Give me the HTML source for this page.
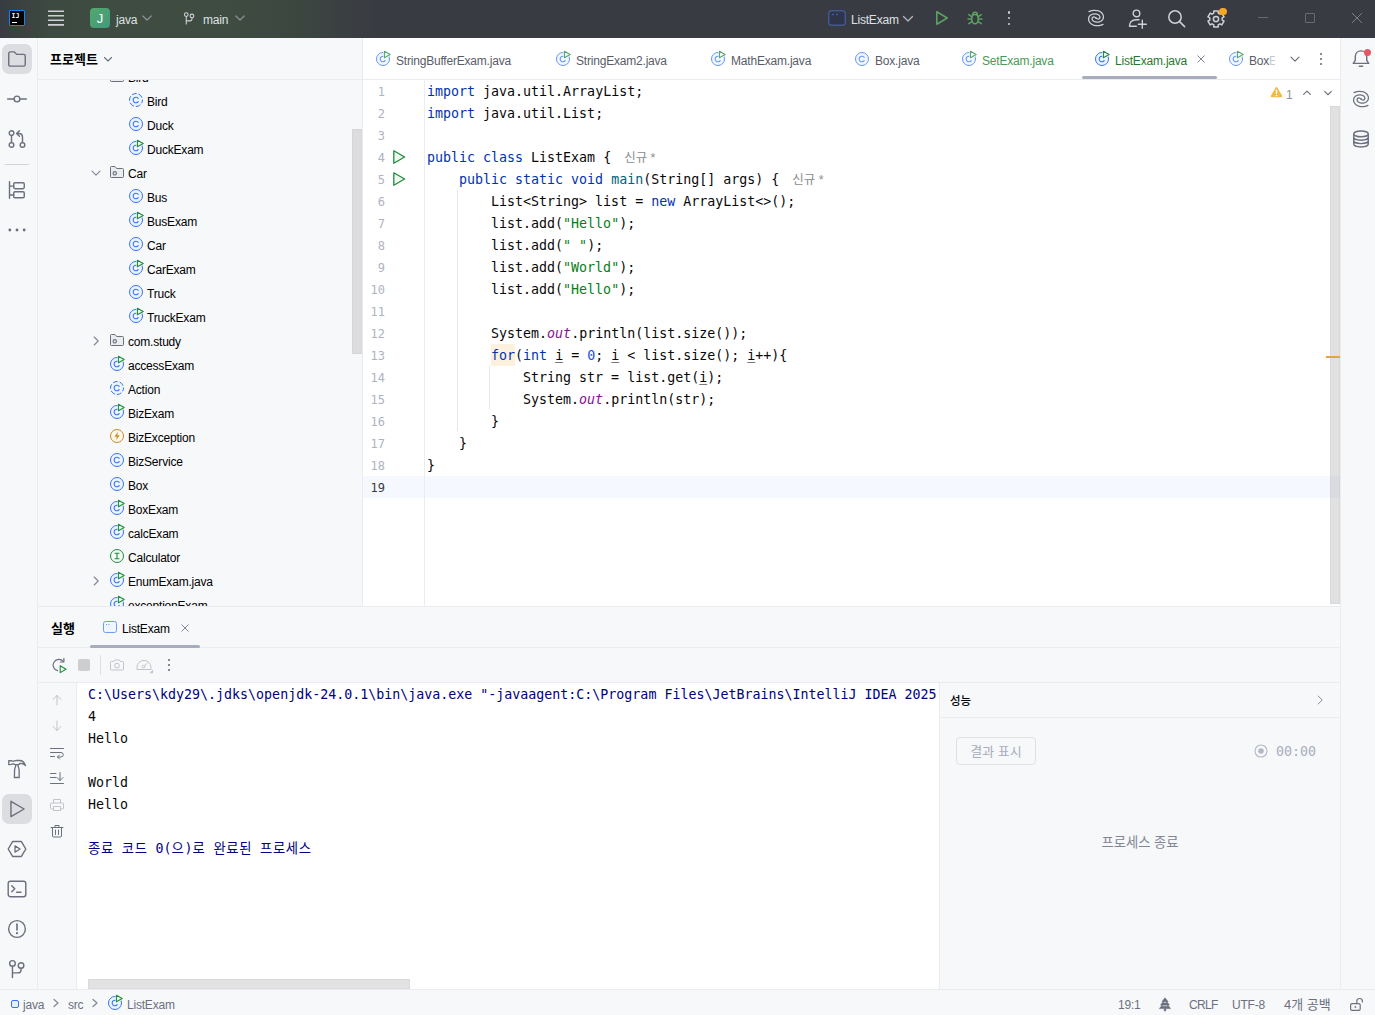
<!DOCTYPE html><html lang="ko"><head><meta charset="utf-8"><title>java – ListExam.java</title><style>

*{box-sizing:border-box;margin:0;padding:0}
html,body{width:1375px;height:1015px;overflow:hidden;background:#f7f8fa;font-family:'Liberation Sans','Noto Sans CJK KR','NanumGothic',sans-serif;font-size:12px;letter-spacing:-0.2px;color:#000}
.abs{position:absolute}
.t{position:absolute;white-space:pre;line-height:16px;height:16px;margin-top:1px}
svg{position:absolute;display:block;overflow:visible}
#title{left:0;top:0;width:1375px;height:38px;background:linear-gradient(90deg,#393b42 0,#3b4340 24px,#3d4a41 55px,#3e4c41 100px,#3e4c41 225px,#3c4640 300px,#393b42 375px)}
#title .t{color:#dfe1e5;font-size:12px}
#lstrip{left:0;top:38px;width:38px;height:952px;background:#f7f8fa;border-right:1px solid #ebecf0}
#rstrip{left:1340px;top:38px;width:35px;height:952px;background:#f7f8fa;border-left:1px solid #ebecf0}
#proj{left:38px;top:38px;width:324px;height:568px;background:#f7f8fa;overflow:hidden}
#editor{left:362px;top:38px;width:978px;height:568px;background:#fff;border-left:1px solid #ebecf0;overflow:hidden}
#bottom{left:38px;top:606px;width:1302px;height:384px;background:#f7f8fa;border-top:1px solid #ebecf0;overflow:hidden}
#status{left:0;top:989px;width:1375px;height:26px;background:#f7f8fa;border-top:1px solid #ebecf0}
#status .t{color:#6c707e}
.code{letter-spacing:0;font-family:'DejaVu Sans Mono','Liberation Mono','Noto Sans CJK KR','NanumGothic',monospace;font-size:13.31px;margin-top:1px;line-height:22px;height:22px;white-space:pre;position:absolute;left:64px;color:#080808}
.ln{margin-top:1px;font-family:'DejaVu Sans Mono','Liberation Mono','Noto Sans CJK KR','NanumGothic',monospace;font-size:12px;line-height:22px;height:22px;position:absolute;color:#aeb3c2;left:0;width:22px;text-align:right;letter-spacing:0}
.k{color:#0033b3}.s{color:#067d17}.n{color:#1750eb}.f{color:#871094;font-style:italic}.m{color:#00627a}
.u{text-decoration:underline;text-underline-offset:2px;text-decoration-color:#7a7a7a;text-decoration-thickness:1px}
.hint{font-family:'Liberation Sans','Noto Sans CJK KR','NanumGothic',sans-serif;font-size:12.5px;color:#8c8c8c}
.con{margin-top:1px;letter-spacing:0;font-family:'DejaVu Sans Mono','Liberation Mono','Noto Sans CJK KR','NanumGothic',monospace;font-size:13.31px;line-height:22px;height:22px;white-space:pre;position:absolute;left:49px;color:#080808}
.sys{color:#00007f}

</style></head><body>
<div id="title" class="abs">
<div class="abs" style="left:9px;top:10px;width:16px;height:16px;background:#000;border:1px solid #1e7ff0;border-radius:1px"></div>
<div class="t" style="left:11.500px;top:11px;font-size:6.500px;line-height:8px;height:8px;font-weight:bold;color:#fff;letter-spacing:0;font-family:'DejaVu Sans Mono','Liberation Mono','Noto Sans CJK KR','NanumGothic',monospace">IJ</div>
<div class="abs" style="left:12px;top:21.800px;width:5px;height:1.200px;background:#fff"></div>
<svg width="20" height="20" viewBox="0 0 20 20" style="left:46px;top:8px"><path d="M2 3.200H18M2 7.750H18M2 12.300H18M2 16.850H18" stroke="#ced0d6" stroke-width="1.600"/></svg>
<div class="abs" style="left:90px;top:8px;width:20px;height:20px;border-radius:4px;background:linear-gradient(135deg,#55a76a,#3f9a80)"></div>
<div class="t" style="left:90px;top:10px;width:20px;text-align:center;color:#fff;font-size:13px;letter-spacing:0">J</div>
<div class="t" style="left:116px;top:11px">java</div>
<svg width="16" height="16" viewBox="0 0 16 16" style="left:139px;top:10px"><path d="M3.8 6L8 10L12.2 6" fill="none" stroke="#8f9299" stroke-width="1.2" stroke-linecap="round" stroke-linejoin="round"/></svg>
<svg width="14.6" height="14.6" viewBox="0 0 20 20" style="left:182px;top:10.600px"><circle cx="5.870" cy="4.930" r="2.550" fill="none" stroke="#ced0d6" stroke-width="1.5"/><circle cx="13.670" cy="6.800" r="2.550" fill="none" stroke="#ced0d6" stroke-width="1.5"/><path d="M5.870 7.500V17.700M13.670 9.350V10.600C13.670 12.600 12.600 13.550 10.800 13.550H5.870" fill="none" stroke="#ced0d6" stroke-width="1.5" stroke-linecap="round"/></svg>
<div class="t" style="left:203px;top:11px">main</div>
<svg width="16" height="16" viewBox="0 0 16 16" style="left:232px;top:10px"><path d="M3.8 6L8 10L12.2 6" fill="none" stroke="#8f9299" stroke-width="1.2" stroke-linecap="round" stroke-linejoin="round"/></svg>
<svg width="20" height="20" viewBox="0 0 20 20" style="left:827px;top:8px"><rect x="1.7" y="2.700" width="16.600" height="14.600" rx="3" fill="#2f3548" stroke="#41598f" stroke-width="1.4"/><path d="M4.800 6.500H7M8.800 6.500H11" stroke="#41598f" stroke-width="1.300"/></svg>
<div class="t" style="left:851px;top:11px">ListExam</div>
<svg width="12" height="8" viewBox="0 0 12 8" style="left:902px;top:15px"><path d="M1.500 1.500L6 6L10.500 1.500" fill="none" stroke="#b4b6bc" stroke-width="1.300" stroke-linecap="round" stroke-linejoin="round"/></svg>
<svg width="16" height="16" viewBox="0 0 16 16" style="left:933.5px;top:10px"><path d="M2.800 1.800L13.200 8L2.800 14.200Z" fill="none" stroke="#5aa35f" stroke-width="1.600" stroke-linejoin="round"/></svg>
<svg width="16" height="16" viewBox="0 0 16 16" style="left:967px;top:10px"><path d="M8 4.600C10 4.600 11.300 6.200 11.300 8.800S10 13.800 8 13.800S4.700 11.400 4.700 8.800S6 4.600 8 4.600Z" fill="none" stroke="#5aa35f" stroke-width="1.500"/><path d="M5.600 4.800C5.600 3.200 6.600 2.200 8 2.200S10.400 3.200 10.400 4.800M1 9H4.600M11.400 9H15M1.800 4.600L5 6.800M14.200 4.600L11 6.800M1.800 13.600L5.200 11.400M14.200 13.600L10.800 11.400" fill="none" stroke="#5aa35f" stroke-width="1.500" stroke-linecap="round"/></svg>
<div class="abs" style="left:1007.800px;top:11.300px;width:2.400px;height:2.400px;border-radius:2px;background:#ced0d6"></div><div class="abs" style="left:1007.800px;top:16.900px;width:2.400px;height:2.400px;border-radius:2px;background:#ced0d6"></div><div class="abs" style="left:1007.800px;top:22.500px;width:2.400px;height:2.400px;border-radius:2px;background:#ced0d6"></div>
<svg width="20" height="20" viewBox="0 0 20 20" style="left:1086px;top:8px"><path d="M3.00 3.60C3.48 3.43 4.97 2.82 5.90 2.60C6.83 2.38 7.62 2.28 8.60 2.30C9.58 2.32 10.78 2.40 11.80 2.70C12.82 3.00 13.88 3.50 14.70 4.10C15.52 4.70 16.25 5.52 16.70 6.30C17.15 7.08 17.37 7.98 17.40 8.80C17.43 9.62 17.25 10.50 16.90 11.20C16.55 11.90 15.93 12.55 15.30 13.00C14.68 13.45 13.93 13.72 13.15 13.90C12.37 14.08 11.43 14.17 10.60 14.10C9.77 14.03 8.86 13.78 8.20 13.50C7.54 13.22 7.00 12.83 6.65 12.40C6.30 11.97 6.11 11.38 6.10 10.90C6.09 10.42 6.33 9.83 6.60 9.50C6.87 9.17 7.30 8.93 7.70 8.90C8.10 8.87 8.63 9.08 9.00 9.30C9.37 9.52 9.75 10.05 9.90 10.20M17.00 16.40C16.52 16.57 15.03 17.18 14.10 17.40C13.17 17.62 12.38 17.72 11.40 17.70C10.42 17.68 9.22 17.60 8.20 17.30C7.18 17.00 6.12 16.50 5.30 15.90C4.48 15.30 3.75 14.48 3.30 13.70C2.85 12.92 2.63 12.02 2.60 11.20C2.57 10.38 2.75 9.50 3.10 8.80C3.45 8.10 4.08 7.45 4.70 7.00C5.33 6.55 6.07 6.28 6.85 6.10C7.63 5.92 8.57 5.83 9.40 5.90C10.23 5.97 11.14 6.22 11.80 6.50C12.46 6.78 13.00 7.17 13.35 7.60C13.70 8.03 13.89 8.62 13.90 9.10C13.91 9.58 13.67 10.17 13.40 10.50C13.13 10.83 12.70 11.07 12.30 11.10C11.90 11.13 11.37 10.92 11.00 10.70C10.63 10.48 10.25 9.95 10.10 9.80" fill="none" stroke="#ced0d6" stroke-width="1.3" stroke-linecap="round"/></svg>
<svg width="20" height="20" viewBox="0 0 20 20" style="left:1127.500px;top:8.500px"><circle cx="8.500" cy="4.400" r="3.300" fill="none" stroke="#ced0d6" stroke-width="1.400"/><path d="M8.300 17.300H1.500C1.500 13.400 3.800 10.700 8.200 10.700H11" fill="none" stroke="#ced0d6" stroke-width="1.400" stroke-linecap="round" stroke-linejoin="round"/><path d="M14.300 11.300V19.300M10.300 15.300H18.300" stroke="#ced0d6" stroke-width="1.400" stroke-linecap="round"/></svg>
<svg width="20" height="20" viewBox="0 0 20 20" style="left:1167px;top:9px"><circle cx="8" cy="8" r="6.200" fill="none" stroke="#ced0d6" stroke-width="1.500"/><path d="M12.600 12.600L17.600 17.600" stroke="#ced0d6" stroke-width="1.500" stroke-linecap="round"/></svg>
<svg width="20" height="20" viewBox="0 0 20 20" style="left:1206px;top:8.500px"><path d="M7.78 4.10L7.79 2.00L12.21 2.00L12.22 4.10L14.00 5.13L15.82 4.08L18.03 7.92L16.22 8.97L16.22 11.03L18.03 12.08L15.82 15.92L14.00 14.87L12.22 15.90L12.21 18.00L7.79 18.00L7.78 15.90L6.00 14.87L4.18 15.92L1.97 12.08L3.78 11.03L3.78 8.97L1.97 7.92L4.18 4.08L6.00 5.13Z" fill="none" stroke="#ced0d6" stroke-width="1.500" stroke-linejoin="round"/><circle cx="10" cy="10" r="2.600" fill="none" stroke="#ced0d6" stroke-width="1.500"/></svg>
<div class="abs" style="left:1219px;top:7.500px;width:7.500px;height:7.500px;border-radius:4px;background:#f5a623"></div>
<div class="abs" style="left:1258px;top:17px;width:10px;height:1px;background:#676a70"></div>
<div class="abs" style="left:1305px;top:13px;width:10px;height:10px;border:1px solid #676a70;border-radius:1px"></div>
<svg width="12" height="12" viewBox="0 0 12 12" style="left:1351px;top:12px"><path d="M1 1L11 11M11 1L1 11" stroke="#7d8087" stroke-width="1"/></svg>
</div>
<div id="lstrip" class="abs">
<div class="abs" style="left:2px;top:6px;width:30px;height:30px;border-radius:7px;background:#dcdde1"></div>
<svg width="22" height="22" viewBox="0 0 20 20" style="left:6.0px;top:10.0px"><path d="M2.5 5a1.5 1.5 0 0 1 1.5-1.5H7.6L9.6 5.8H16a1.5 1.5 0 0 1 1.5 1.5V15a1.5 1.5 0 0 1-1.5 1.5H4A1.5 1.5 0 0 1 2.5 15z" fill="none" stroke="#6c707e" stroke-width="1.3" stroke-linejoin="round"/></svg>
<svg width="22" height="22" viewBox="0 0 20 20" style="left:6.0px;top:50.0px"><circle cx="10" cy="10" r="2.6" fill="none" stroke="#6c707e" stroke-width="1.3"/><path d="M1.5 10H7.4M12.6 10H18.5" stroke="#6c707e" stroke-width="1.3" stroke-linecap="round"/></svg>
<svg width="22" height="22" viewBox="0 0 20 20" style="left:6.0px;top:90.0px"><circle cx="5" cy="4.6" r="2.1" fill="none" stroke="#6c707e" stroke-width="1.3"/><circle cx="5" cy="15.4" r="2.1" fill="none" stroke="#6c707e" stroke-width="1.3"/><circle cx="15" cy="15.4" r="2.1" fill="none" stroke="#6c707e" stroke-width="1.3"/><path d="M5 6.7V13.3M15 13.3V8.4C15 6.2 13.8 5 11.6 5H10M12.2 2.4L9.6 5L12.2 7.6" fill="none" stroke="#6c707e" stroke-width="1.3" stroke-linecap="round" stroke-linejoin="round"/></svg>
<div class="abs" style="left:5px;top:126px;width:24px;height:1px;background:#d3d5db"></div>
<svg width="22" height="22" viewBox="0 0 20 20" style="left:6.0px;top:141.0px"><path d="M3.2 2.5V17.5M3.2 6.5H7M3.2 14.5H7" fill="none" stroke="#6c707e" stroke-width="1.3" stroke-linecap="round"/><rect x="7" y="3.4" width="9.6" height="5.4" rx="1.2" fill="none" stroke="#6c707e" stroke-width="1.3"/><rect x="7" y="11.6" width="9.6" height="5.4" rx="1.2" fill="none" stroke="#6c707e" stroke-width="1.3"/></svg>
<svg width="22" height="22" viewBox="0 0 20 20" style="left:6.0px;top:181.0px"><circle cx="3.5" cy="10" r="1.3" fill="#6c707e"/><circle cx="10" cy="10" r="1.3" fill="#6c707e"/><circle cx="16.500" cy="10" r="1.3" fill="#6c707e"/></svg>
<svg width="22" height="22" viewBox="0 0 20 20" style="left:6.0px;top:720.0px"><path d="M2.500 2.500H5C5.800 3 6.800 3 7.600 2.600L9 2.300H12.600C15 2.300 16.600 4 17.700 6.900C16.400 5.600 14.600 4.900 12.800 4.900L11.300 6.100H8.300L6.600 5.400C6 5.300 5.400 5.500 4.800 5.800L2.500 6Z" fill="none" stroke="#6c707e" stroke-width="1.200" stroke-linejoin="round"/><path d="M8.800 6.100V7.200L7.850 10.300L7.600 17.700H12L11.900 10.300L10.900 7.200V6.100" fill="none" stroke="#6c707e" stroke-width="1.200" stroke-linejoin="round"/></svg>
<div class="abs" style="left:2px;top:756px;width:30px;height:30px;border-radius:7px;background:#dcdde1"></div>
<svg width="22" height="22" viewBox="0 0 20 20" style="left:6.0px;top:760.0px"><path d="M4.500 3L16.500 10L4.500 17Z" fill="none" stroke="#6c707e" stroke-width="1.3" stroke-linejoin="round"/></svg>
<svg width="22" height="22" viewBox="0 0 20 20" style="left:6.0px;top:800.0px"><path d="M6 3.2H14L18 10L14 16.800H6L2 10Z" fill="none" stroke="#6c707e" stroke-width="1.3" stroke-linejoin="round"/><path d="M8.200 7.200L12.800 10L8.200 12.800Z" fill="none" stroke="#6c707e" stroke-width="1.2" stroke-linejoin="round"/></svg>
<svg width="22" height="22" viewBox="0 0 20 20" style="left:6.0px;top:840.0px"><rect x="2" y="3" width="16" height="14" rx="2" fill="none" stroke="#6c707e" stroke-width="1.3"/><path d="M5.200 7L8 9.800L5.200 12.600M9.600 13H13.600" fill="none" stroke="#6c707e" stroke-width="1.3" stroke-linecap="round" stroke-linejoin="round"/></svg>
<svg width="22" height="22" viewBox="0 0 20 20" style="left:6.0px;top:880.0px"><circle cx="10" cy="10" r="7.600" fill="none" stroke="#6c707e" stroke-width="1.3"/><path d="M10 5.600V11" stroke="#6c707e" stroke-width="1.500" stroke-linecap="round"/><circle cx="10" cy="13.800" r="1" fill="#6c707e"/></svg>
<svg width="22" height="22" viewBox="0 0 20 20" style="left:6.0px;top:920.0px"><circle cx="5.870" cy="4.930" r="2.550" fill="none" stroke="#6c707e" stroke-width="1.3"/><circle cx="13.670" cy="6.800" r="2.550" fill="none" stroke="#6c707e" stroke-width="1.3"/><path d="M5.870 7.500V17.700M13.670 9.350V10.600C13.670 12.600 12.600 13.550 10.800 13.550H5.870" fill="none" stroke="#6c707e" stroke-width="1.3" stroke-linecap="round"/></svg>
</div>
<div id="rstrip" class="abs">
<svg width="22" height="22" viewBox="0 0 20 20" style="left:8.8px;top:10.299999999999997px"><path d="M3 14L4.800 11.200V8C4.800 4.800 7 2.600 10 2.600S15.200 4.800 15.200 8V11.200L17 14Z" fill="none" stroke="#6c707e" stroke-width="1.300" stroke-linejoin="round"/><path d="M8.600 16.600H11.400" stroke="#6c707e" stroke-width="1.400" stroke-linecap="round"/></svg>
<div class="abs" style="left:22.900px;top:10.900px;width:7px;height:7px;border-radius:4px;background:#e55765"></div>
<svg width="20" height="20" viewBox="0 0 20 20" style="left:9.800px;top:50.900px"><path d="M3.00 3.60C3.48 3.43 4.97 2.82 5.90 2.60C6.83 2.38 7.62 2.28 8.60 2.30C9.58 2.32 10.78 2.40 11.80 2.70C12.82 3.00 13.88 3.50 14.70 4.10C15.52 4.70 16.25 5.52 16.70 6.30C17.15 7.08 17.37 7.98 17.40 8.80C17.43 9.62 17.25 10.50 16.90 11.20C16.55 11.90 15.93 12.55 15.30 13.00C14.68 13.45 13.93 13.72 13.15 13.90C12.37 14.08 11.43 14.17 10.60 14.10C9.77 14.03 8.86 13.78 8.20 13.50C7.54 13.22 7.00 12.83 6.65 12.40C6.30 11.97 6.11 11.38 6.10 10.90C6.09 10.42 6.33 9.83 6.60 9.50C6.87 9.17 7.30 8.93 7.70 8.90C8.10 8.87 8.63 9.08 9.00 9.30C9.37 9.52 9.75 10.05 9.90 10.20M17.00 16.40C16.52 16.57 15.03 17.18 14.10 17.40C13.17 17.62 12.38 17.72 11.40 17.70C10.42 17.68 9.22 17.60 8.20 17.30C7.18 17.00 6.12 16.50 5.30 15.90C4.48 15.30 3.75 14.48 3.30 13.70C2.85 12.92 2.63 12.02 2.60 11.20C2.57 10.38 2.75 9.50 3.10 8.80C3.45 8.10 4.08 7.45 4.70 7.00C5.33 6.55 6.07 6.28 6.85 6.10C7.63 5.92 8.57 5.83 9.40 5.90C10.23 5.97 11.14 6.22 11.80 6.50C12.46 6.78 13.00 7.17 13.35 7.60C13.70 8.03 13.89 8.62 13.90 9.10C13.91 9.58 13.67 10.17 13.40 10.50C13.13 10.83 12.70 11.07 12.30 11.10C11.90 11.13 11.37 10.92 11.00 10.70C10.63 10.48 10.25 9.95 10.10 9.80" fill="none" stroke="#6c707e" stroke-width="1.25" stroke-linecap="round"/></svg>
<svg width="22" height="22" viewBox="0 0 20 20" style="left:8.8px;top:90.0px"><ellipse cx="10" cy="5.400" rx="6.600" ry="2.600" fill="none" stroke="#6c707e" stroke-width="1.300"/><path d="M3.400 5.400V14.600C3.400 16 6.300 17.200 10 17.200S16.600 16 16.600 14.600V5.400M3.400 8.500C3.400 9.900 6.300 11.100 10 11.100S16.600 9.900 16.600 8.500M3.400 11.600C3.400 13 6.300 14.200 10 14.200S16.600 13 16.600 11.600" fill="none" stroke="#6c707e" stroke-width="1.300"/></svg>
</div>
<div id="proj" class="abs">
<div class="abs" style="left:0;top:41px;width:324px;height:1px;background:#ebecf0"></div>
<div class="t" style="left:12px;top:13px;font-weight:bold;font-size:13px;letter-spacing:0;color:#000">프로젝트</div>
<svg width="16" height="16" viewBox="0 0 16 16" style="left:62px;top:13px"><path d="M4.500 6.500L8 10L11.500 6.500" fill="none" stroke="#6c707e" stroke-width="1.100" stroke-linecap="round" stroke-linejoin="round"/></svg>
<div class="abs" style="left:0;top:42px;width:324px;height:526px;overflow:hidden">
<svg style="left:71px;top:-11.7px" width="16" height="16" viewBox="0 0 16 16" ><path d="M1.5 3.5a1 1 0 0 1 1-1H6l1.6 2h5.9a1 1 0 0 1 1 1v7a1 1 0 0 1-1 1h-11a1 1 0 0 1-1-1z" fill="#ebecf0" stroke="#6c707e"/><circle cx="5.800" cy="9.300" r="1.700" fill="none" stroke="#6c707e" stroke-width="1.100"/></svg>
<div class="t" style="left:90px;top:-11px">Bird</div>
<svg style="left:90px;top:12.3px" width="16" height="16" viewBox="0 0 16 16" ><circle cx="8" cy="8" r="6.5" fill="#edf3ff" stroke="#3574f0" stroke-dasharray="4.9 1.9" stroke-dashoffset="1.5"/><path d="M10.2 6.3A2.8 2.8 0 1 0 10.2 9.7" fill="none" stroke="#3574f0" stroke-width="1.1" stroke-linecap="round"/></svg>
<div class="t" style="left:109px;top:13px">Bird</div>
<svg style="left:90px;top:36.3px" width="16" height="16" viewBox="0 0 16 16" ><circle cx="8" cy="8" r="6.5" fill="#edf3ff" stroke="#3574f0"/><path d="M10.2 6.3A2.8 2.8 0 1 0 10.2 9.7" fill="none" stroke="#3574f0" stroke-width="1.1" stroke-linecap="round"/></svg>
<div class="t" style="left:109px;top:37px">Duck</div>
<svg style="left:90px;top:60.3px" width="16" height="16" viewBox="0 0 16 16" ><circle cx="8" cy="8" r="6.5" fill="#edf3ff" stroke="#3574f0"/><path d="M10.2 6.3A2.8 2.8 0 1 0 10.2 9.7" fill="none" stroke="#3574f0" stroke-width="1.1" stroke-linecap="round"/><path d="M9.4 0.3L15.2 3.55L9.4 6.8Z" fill="#f7f8fa" stroke="#f7f8fa" stroke-width="2.2" stroke-linejoin="round"/><path d="M9.4 0.3L15.2 3.55L9.4 6.8Z" fill="#f2fcf3" stroke="#208a3c" stroke-width="1.1" stroke-linejoin="round"/></svg>
<div class="t" style="left:109px;top:61px">DuckExam</div>
<svg style="left:71px;top:84.3px" width="16" height="16" viewBox="0 0 16 16" ><path d="M1.5 3.5a1 1 0 0 1 1-1H6l1.6 2h5.9a1 1 0 0 1 1 1v7a1 1 0 0 1-1 1h-11a1 1 0 0 1-1-1z" fill="#ebecf0" stroke="#6c707e"/><circle cx="5.800" cy="9.300" r="1.700" fill="none" stroke="#6c707e" stroke-width="1.100"/></svg>
<div class="t" style="left:90px;top:85px">Car</div>
<svg style="left:50px;top:85px" width="16" height="16" viewBox="0 0 16 16" ><path d="M4 6.200L8 10.200L12 6.200" fill="none" stroke="#818594" stroke-width="1.1" stroke-linecap="round" stroke-linejoin="round"/></svg>
<svg style="left:90px;top:108.3px" width="16" height="16" viewBox="0 0 16 16" ><circle cx="8" cy="8" r="6.5" fill="#edf3ff" stroke="#3574f0"/><path d="M10.2 6.3A2.8 2.8 0 1 0 10.2 9.7" fill="none" stroke="#3574f0" stroke-width="1.1" stroke-linecap="round"/></svg>
<div class="t" style="left:109px;top:109px">Bus</div>
<svg style="left:90px;top:132.3px" width="16" height="16" viewBox="0 0 16 16" ><circle cx="8" cy="8" r="6.5" fill="#edf3ff" stroke="#3574f0"/><path d="M10.2 6.3A2.8 2.8 0 1 0 10.2 9.7" fill="none" stroke="#3574f0" stroke-width="1.1" stroke-linecap="round"/><path d="M9.4 0.3L15.2 3.55L9.4 6.8Z" fill="#f7f8fa" stroke="#f7f8fa" stroke-width="2.2" stroke-linejoin="round"/><path d="M9.4 0.3L15.2 3.55L9.4 6.8Z" fill="#f2fcf3" stroke="#208a3c" stroke-width="1.1" stroke-linejoin="round"/></svg>
<div class="t" style="left:109px;top:133px">BusExam</div>
<svg style="left:90px;top:156.3px" width="16" height="16" viewBox="0 0 16 16" ><circle cx="8" cy="8" r="6.5" fill="#edf3ff" stroke="#3574f0"/><path d="M10.2 6.3A2.8 2.8 0 1 0 10.2 9.7" fill="none" stroke="#3574f0" stroke-width="1.1" stroke-linecap="round"/></svg>
<div class="t" style="left:109px;top:157px">Car</div>
<svg style="left:90px;top:180.3px" width="16" height="16" viewBox="0 0 16 16" ><circle cx="8" cy="8" r="6.5" fill="#edf3ff" stroke="#3574f0"/><path d="M10.2 6.3A2.8 2.8 0 1 0 10.2 9.7" fill="none" stroke="#3574f0" stroke-width="1.1" stroke-linecap="round"/><path d="M9.4 0.3L15.2 3.55L9.4 6.8Z" fill="#f7f8fa" stroke="#f7f8fa" stroke-width="2.2" stroke-linejoin="round"/><path d="M9.4 0.3L15.2 3.55L9.4 6.8Z" fill="#f2fcf3" stroke="#208a3c" stroke-width="1.1" stroke-linejoin="round"/></svg>
<div class="t" style="left:109px;top:181px">CarExam</div>
<svg style="left:90px;top:204.3px" width="16" height="16" viewBox="0 0 16 16" ><circle cx="8" cy="8" r="6.5" fill="#edf3ff" stroke="#3574f0"/><path d="M10.2 6.3A2.8 2.8 0 1 0 10.2 9.7" fill="none" stroke="#3574f0" stroke-width="1.1" stroke-linecap="round"/></svg>
<div class="t" style="left:109px;top:205px">Truck</div>
<svg style="left:90px;top:228.3px" width="16" height="16" viewBox="0 0 16 16" ><circle cx="8" cy="8" r="6.5" fill="#edf3ff" stroke="#3574f0"/><path d="M10.2 6.3A2.8 2.8 0 1 0 10.2 9.7" fill="none" stroke="#3574f0" stroke-width="1.1" stroke-linecap="round"/><path d="M9.4 0.3L15.2 3.55L9.4 6.8Z" fill="#f7f8fa" stroke="#f7f8fa" stroke-width="2.2" stroke-linejoin="round"/><path d="M9.4 0.3L15.2 3.55L9.4 6.8Z" fill="#f2fcf3" stroke="#208a3c" stroke-width="1.1" stroke-linejoin="round"/></svg>
<div class="t" style="left:109px;top:229px">TruckExam</div>
<svg style="left:71px;top:252.3px" width="16" height="16" viewBox="0 0 16 16" ><path d="M1.5 3.5a1 1 0 0 1 1-1H6l1.6 2h5.9a1 1 0 0 1 1 1v7a1 1 0 0 1-1 1h-11a1 1 0 0 1-1-1z" fill="#ebecf0" stroke="#6c707e"/><circle cx="5.800" cy="9.300" r="1.700" fill="none" stroke="#6c707e" stroke-width="1.100"/></svg>
<div class="t" style="left:90px;top:253px">com.study</div>
<svg style="left:50px;top:253px" width="16" height="16" viewBox="0 0 16 16" ><path d="M6.200 4L10.200 8L6.200 12" fill="none" stroke="#818594" stroke-width="1.1" stroke-linecap="round" stroke-linejoin="round"/></svg>
<svg style="left:71px;top:276.3px" width="16" height="16" viewBox="0 0 16 16" ><circle cx="8" cy="8" r="6.5" fill="#edf3ff" stroke="#3574f0"/><path d="M10.2 6.3A2.8 2.8 0 1 0 10.2 9.7" fill="none" stroke="#3574f0" stroke-width="1.1" stroke-linecap="round"/><path d="M9.4 0.3L15.2 3.55L9.4 6.8Z" fill="#f7f8fa" stroke="#f7f8fa" stroke-width="2.2" stroke-linejoin="round"/><path d="M9.4 0.3L15.2 3.55L9.4 6.8Z" fill="#f2fcf3" stroke="#208a3c" stroke-width="1.1" stroke-linejoin="round"/></svg>
<div class="t" style="left:90px;top:277px">accessExam</div>
<svg style="left:71px;top:300.3px" width="16" height="16" viewBox="0 0 16 16" ><circle cx="8" cy="8" r="6.5" fill="#edf3ff" stroke="#3574f0" stroke-dasharray="4.9 1.9" stroke-dashoffset="1.5"/><path d="M10.2 6.3A2.8 2.8 0 1 0 10.2 9.7" fill="none" stroke="#3574f0" stroke-width="1.1" stroke-linecap="round"/></svg>
<div class="t" style="left:90px;top:301px">Action</div>
<svg style="left:71px;top:324.3px" width="16" height="16" viewBox="0 0 16 16" ><circle cx="8" cy="8" r="6.5" fill="#edf3ff" stroke="#3574f0"/><path d="M10.2 6.3A2.8 2.8 0 1 0 10.2 9.7" fill="none" stroke="#3574f0" stroke-width="1.1" stroke-linecap="round"/><path d="M9.4 0.3L15.2 3.55L9.4 6.8Z" fill="#f7f8fa" stroke="#f7f8fa" stroke-width="2.2" stroke-linejoin="round"/><path d="M9.4 0.3L15.2 3.55L9.4 6.8Z" fill="#f2fcf3" stroke="#208a3c" stroke-width="1.1" stroke-linejoin="round"/></svg>
<div class="t" style="left:90px;top:325px">BizExam</div>
<svg style="left:71px;top:348.3px" width="16" height="16" viewBox="0 0 16 16" ><circle cx="8" cy="8" r="6.5" fill="#fff7e8" stroke="#c68a2d"/><path d="M9.2 3.8L5.4 8.7H7.9L6.9 12.2L10.7 7.3H8.2Z" fill="#c68a2d"/></svg>
<div class="t" style="left:90px;top:349px">BizException</div>
<svg style="left:71px;top:372.3px" width="16" height="16" viewBox="0 0 16 16" ><circle cx="8" cy="8" r="6.5" fill="#edf3ff" stroke="#3574f0"/><path d="M10.2 6.3A2.8 2.8 0 1 0 10.2 9.7" fill="none" stroke="#3574f0" stroke-width="1.1" stroke-linecap="round"/></svg>
<div class="t" style="left:90px;top:373px">BizService</div>
<svg style="left:71px;top:396.3px" width="16" height="16" viewBox="0 0 16 16" ><circle cx="8" cy="8" r="6.5" fill="#edf3ff" stroke="#3574f0"/><path d="M10.2 6.3A2.8 2.8 0 1 0 10.2 9.7" fill="none" stroke="#3574f0" stroke-width="1.1" stroke-linecap="round"/></svg>
<div class="t" style="left:90px;top:397px">Box</div>
<svg style="left:71px;top:420.3px" width="16" height="16" viewBox="0 0 16 16" ><circle cx="8" cy="8" r="6.5" fill="#edf3ff" stroke="#3574f0"/><path d="M10.2 6.3A2.8 2.8 0 1 0 10.2 9.7" fill="none" stroke="#3574f0" stroke-width="1.1" stroke-linecap="round"/><path d="M9.4 0.3L15.2 3.55L9.4 6.8Z" fill="#f7f8fa" stroke="#f7f8fa" stroke-width="2.2" stroke-linejoin="round"/><path d="M9.4 0.3L15.2 3.55L9.4 6.8Z" fill="#f2fcf3" stroke="#208a3c" stroke-width="1.1" stroke-linejoin="round"/></svg>
<div class="t" style="left:90px;top:421px">BoxExam</div>
<svg style="left:71px;top:444.3px" width="16" height="16" viewBox="0 0 16 16" ><circle cx="8" cy="8" r="6.5" fill="#edf3ff" stroke="#3574f0"/><path d="M10.2 6.3A2.8 2.8 0 1 0 10.2 9.7" fill="none" stroke="#3574f0" stroke-width="1.1" stroke-linecap="round"/><path d="M9.4 0.3L15.2 3.55L9.4 6.8Z" fill="#f7f8fa" stroke="#f7f8fa" stroke-width="2.2" stroke-linejoin="round"/><path d="M9.4 0.3L15.2 3.55L9.4 6.8Z" fill="#f2fcf3" stroke="#208a3c" stroke-width="1.1" stroke-linejoin="round"/></svg>
<div class="t" style="left:90px;top:445px">calcExam</div>
<svg style="left:71px;top:468.3px" width="16" height="16" viewBox="0 0 16 16" ><circle cx="8" cy="8" r="6.5" fill="#f2fcf3" stroke="#208a3c"/><path d="M6 5.2H10M6 10.8H10M8 5.2V10.8" fill="none" stroke="#208a3c" stroke-width="1.1" stroke-linecap="round"/></svg>
<div class="t" style="left:90px;top:469px">Calculator</div>
<svg style="left:71px;top:492.3px" width="16" height="16" viewBox="0 0 16 16" ><circle cx="8" cy="8" r="6.5" fill="#edf3ff" stroke="#3574f0"/><path d="M10.2 6.3A2.8 2.8 0 1 0 10.2 9.7" fill="none" stroke="#3574f0" stroke-width="1.1" stroke-linecap="round"/><path d="M9.4 0.3L15.2 3.55L9.4 6.8Z" fill="#f7f8fa" stroke="#f7f8fa" stroke-width="2.2" stroke-linejoin="round"/><path d="M9.4 0.3L15.2 3.55L9.4 6.8Z" fill="#f2fcf3" stroke="#208a3c" stroke-width="1.1" stroke-linejoin="round"/></svg>
<div class="t" style="left:90px;top:493px">EnumExam.java</div>
<svg style="left:50px;top:493px" width="16" height="16" viewBox="0 0 16 16" ><path d="M6.200 4L10.200 8L6.200 12" fill="none" stroke="#818594" stroke-width="1.1" stroke-linecap="round" stroke-linejoin="round"/></svg>
<svg style="left:71px;top:516.3px" width="16" height="16" viewBox="0 0 16 16" ><circle cx="8" cy="8" r="6.5" fill="#edf3ff" stroke="#3574f0"/><path d="M10.2 6.3A2.8 2.8 0 1 0 10.2 9.7" fill="none" stroke="#3574f0" stroke-width="1.1" stroke-linecap="round"/><path d="M9.4 0.3L15.2 3.55L9.4 6.8Z" fill="#f7f8fa" stroke="#f7f8fa" stroke-width="2.2" stroke-linejoin="round"/><path d="M9.4 0.3L15.2 3.55L9.4 6.8Z" fill="#f2fcf3" stroke="#208a3c" stroke-width="1.1" stroke-linejoin="round"/></svg>
<div class="t" style="left:90px;top:517px">exceptionExam</div>
</div>
<div class="abs" style="left:314px;top:91px;width:10px;height:225px;background:#dddde0;border:1px solid #d6d6d9"></div>
</div>
<div id="editor" class="abs">
<div class="abs" style="left:0;top:41px;width:977px;height:1px;background:#ebecf0"></div>
<svg style="left:12px;top:13px;opacity:0.75" width="16" height="16" viewBox="0 0 16 16" ><circle cx="8" cy="8" r="6.5" fill="#edf3ff" stroke="#3574f0"/><path d="M10.2 6.3A2.8 2.8 0 1 0 10.2 9.7" fill="none" stroke="#3574f0" stroke-width="1.1" stroke-linecap="round"/><path d="M9.4 0.3L15.2 3.55L9.4 6.8Z" fill="#fff" stroke="#fff" stroke-width="2.2" stroke-linejoin="round"/><path d="M9.4 0.3L15.2 3.55L9.4 6.8Z" fill="#f2fcf3" stroke="#208a3c" stroke-width="1.1" stroke-linejoin="round"/></svg>
<div class="t" style="left:33px;top:14px;color:#595c67">StringBufferExam.java</div>
<svg style="left:192px;top:13px;opacity:0.75" width="16" height="16" viewBox="0 0 16 16" ><circle cx="8" cy="8" r="6.5" fill="#edf3ff" stroke="#3574f0"/><path d="M10.2 6.3A2.8 2.8 0 1 0 10.2 9.7" fill="none" stroke="#3574f0" stroke-width="1.1" stroke-linecap="round"/><path d="M9.4 0.3L15.2 3.55L9.4 6.8Z" fill="#fff" stroke="#fff" stroke-width="2.2" stroke-linejoin="round"/><path d="M9.4 0.3L15.2 3.55L9.4 6.8Z" fill="#f2fcf3" stroke="#208a3c" stroke-width="1.1" stroke-linejoin="round"/></svg>
<div class="t" style="left:213px;top:14px;color:#595c67">StringExam2.java</div>
<svg style="left:347px;top:13px;opacity:0.75" width="16" height="16" viewBox="0 0 16 16" ><circle cx="8" cy="8" r="6.5" fill="#edf3ff" stroke="#3574f0"/><path d="M10.2 6.3A2.8 2.8 0 1 0 10.2 9.7" fill="none" stroke="#3574f0" stroke-width="1.1" stroke-linecap="round"/><path d="M9.4 0.3L15.2 3.55L9.4 6.8Z" fill="#fff" stroke="#fff" stroke-width="2.2" stroke-linejoin="round"/><path d="M9.4 0.3L15.2 3.55L9.4 6.8Z" fill="#f2fcf3" stroke="#208a3c" stroke-width="1.1" stroke-linejoin="round"/></svg>
<div class="t" style="left:368px;top:14px;color:#595c67">MathExam.java</div>
<svg style="left:491px;top:13px;opacity:0.75" width="16" height="16" viewBox="0 0 16 16" ><circle cx="8" cy="8" r="6.5" fill="#edf3ff" stroke="#3574f0"/><path d="M10.2 6.3A2.8 2.8 0 1 0 10.2 9.7" fill="none" stroke="#3574f0" stroke-width="1.1" stroke-linecap="round"/></svg>
<div class="t" style="left:512px;top:14px;color:#595c67">Box.java</div>
<svg style="left:598px;top:13px;opacity:0.75" width="16" height="16" viewBox="0 0 16 16" ><circle cx="8" cy="8" r="6.5" fill="#edf3ff" stroke="#3574f0"/><path d="M10.2 6.3A2.8 2.8 0 1 0 10.2 9.7" fill="none" stroke="#3574f0" stroke-width="1.1" stroke-linecap="round"/><path d="M9.4 0.3L15.2 3.55L9.4 6.8Z" fill="#fff" stroke="#fff" stroke-width="2.2" stroke-linejoin="round"/><path d="M9.4 0.3L15.2 3.55L9.4 6.8Z" fill="#f2fcf3" stroke="#208a3c" stroke-width="1.1" stroke-linejoin="round"/></svg>
<div class="t" style="left:619px;top:14px;color:#4a9a52">SetExam.java</div>
<svg style="left:731px;top:13px" width="16" height="16" viewBox="0 0 16 16" ><circle cx="8" cy="8" r="6.5" fill="#edf3ff" stroke="#3574f0"/><path d="M10.2 6.3A2.8 2.8 0 1 0 10.2 9.7" fill="none" stroke="#3574f0" stroke-width="1.1" stroke-linecap="round"/><path d="M9.4 0.3L15.2 3.55L9.4 6.8Z" fill="#fff" stroke="#fff" stroke-width="2.2" stroke-linejoin="round"/><path d="M9.4 0.3L15.2 3.55L9.4 6.8Z" fill="#f2fcf3" stroke="#208a3c" stroke-width="1.1" stroke-linejoin="round"/></svg>
<div class="t" style="left:752px;top:14px;color:#1f7a2e">ListExam.java</div>
<svg style="left:865px;top:13px;opacity:0.75" width="16" height="16" viewBox="0 0 16 16" ><circle cx="8" cy="8" r="6.5" fill="#edf3ff" stroke="#3574f0"/><path d="M10.2 6.3A2.8 2.8 0 1 0 10.2 9.7" fill="none" stroke="#3574f0" stroke-width="1.1" stroke-linecap="round"/><path d="M9.4 0.3L15.2 3.55L9.4 6.8Z" fill="#fff" stroke="#fff" stroke-width="2.2" stroke-linejoin="round"/><path d="M9.4 0.3L15.2 3.55L9.4 6.8Z" fill="#f2fcf3" stroke="#208a3c" stroke-width="1.1" stroke-linejoin="round"/></svg>
<div class="t" style="left:886px;top:14px;color:#595c67">Box</div>
<div class="t" style="left:906px;top:14px;color:#c6c9d2;width:5.500px;overflow:hidden">E</div>
<svg width="10" height="10" viewBox="0 0 10 10" style="left:833px;top:16px"><path d="M1.500 1.500L8.500 8.500M8.500 1.500L1.500 8.500" stroke="#818594" stroke-width="1"/></svg>
<div class="abs" style="left:719px;top:38px;width:135px;height:3px;border-radius:2px;background:#a8adbd"></div>
<svg style="left:924px;top:13px" width="16" height="16" viewBox="0 0 16 16" ><path d="M4 6.200L8 10.200L12 6.200" fill="none" stroke="#6c707e" stroke-width="1.2" stroke-linecap="round" stroke-linejoin="round"/></svg>
<svg width="16" height="16" viewBox="0 0 16 16" style="left:950px;top:13px"><circle cx="8" cy="3" r="1.100" fill="#6c707e"/><circle cx="8" cy="8" r="1.100" fill="#6c707e"/><circle cx="8" cy="13" r="1.100" fill="#6c707e"/></svg>
<div class="abs" style="left:0;top:438px;width:977px;height:22px;background:#f5f8fe"></div>
<div class="abs" style="left:61px;top:42px;width:1px;height:526px;background:#ebecf0"></div>
<div class="abs" style="left:967px;top:68px;width:10px;height:498px;background:rgba(120,120,120,0.22);border:1px solid rgba(100,100,100,0.06)"></div>
<div class="abs" style="left:963px;top:318px;width:14px;height:2px;background:#e8a33e"></div>
<svg width="13" height="12" viewBox="0 0 13 12" style="left:906.5999999999999px;top:48.3px"><path d="M6.500 2L11.300 10.200H1.700Z" fill="#f2b944" stroke="#f2b944" stroke-width="2" stroke-linejoin="round"/><path d="M6.500 4.200V7.300" stroke="#fff" stroke-width="1.500" stroke-linecap="round"/><circle cx="6.500" cy="9.500" r="0.850" fill="#fff"/></svg>
<div class="t" style="left:923px;top:48px;color:#8c909c;font-size:12px">1</div>
<svg width="12" height="12" viewBox="0 0 12 12" style="left:938px;top:49px"><path d="M2.650 7.400L6 4.050L9.350 7.400" fill="none" stroke="#6c707e" stroke-width="1.100" stroke-linecap="round" stroke-linejoin="round"/></svg>
<svg width="12" height="12" viewBox="0 0 12 12" style="left:959px;top:49px"><path d="M2.650 4.400L6 7.750L9.350 4.400" fill="none" stroke="#6c707e" stroke-width="1.100" stroke-linecap="round" stroke-linejoin="round"/></svg>
<div class="abs" style="left:94px;top:152px;width:1px;height:241px;background:#e6e7ec"></div>
<div class="abs" style="left:126px;top:328px;width:1px;height:43px;background:#e6e7ec"></div>
<div class="abs" style="left:128px;top:306px;width:24px;height:22px;background:#fcf1dc"></div>
<div class="ln" style="top:42px;color:#aeb3c2">1</div>
<div class="code" style="top:42px"><span class="k">import</span> java.util.ArrayList;</div>
<div class="ln" style="top:64px;color:#aeb3c2">2</div>
<div class="code" style="top:64px"><span class="k">import</span> java.util.List;</div>
<div class="ln" style="top:86px;color:#aeb3c2">3</div>
<div class="ln" style="top:108px;color:#aeb3c2">4</div>
<div class="code" style="top:108px"><span class="k">public class</span> ListExam {<span class="hint" style="margin-left:13px">신규 *</span></div>
<div class="ln" style="top:130px;color:#aeb3c2">5</div>
<div class="code" style="top:130px">    <span class="k">public static void</span> <span class="m">main</span>(String[] args) {<span class="hint" style="margin-left:13px">신규 *</span></div>
<div class="ln" style="top:152px;color:#aeb3c2">6</div>
<div class="code" style="top:152px">        List&lt;String&gt; list = <span class="k">new</span> ArrayList&lt;&gt;();</div>
<div class="ln" style="top:174px;color:#aeb3c2">7</div>
<div class="code" style="top:174px">        list.add(<span class="s">"Hello"</span>);</div>
<div class="ln" style="top:196px;color:#aeb3c2">8</div>
<div class="code" style="top:196px">        list.add(<span class="s">" "</span>);</div>
<div class="ln" style="top:218px;color:#aeb3c2">9</div>
<div class="code" style="top:218px">        list.add(<span class="s">"World"</span>);</div>
<div class="ln" style="top:240px;color:#aeb3c2">10</div>
<div class="code" style="top:240px">        list.add(<span class="s">"Hello"</span>);</div>
<div class="ln" style="top:262px;color:#aeb3c2">11</div>
<div class="ln" style="top:284px;color:#aeb3c2">12</div>
<div class="code" style="top:284px">        System.<span class="f">out</span>.println(list.size());</div>
<div class="ln" style="top:306px;color:#aeb3c2">13</div>
<div class="code" style="top:306px">        <span class="k">for</span>(<span class="k">int</span> <span class="u">i</span> = <span class="n">0</span>; <span class="u">i</span> &lt; list.size(); <span class="u">i</span>++){</div>
<div class="ln" style="top:328px;color:#aeb3c2">14</div>
<div class="code" style="top:328px">            String str = list.get(<span class="u">i</span>);</div>
<div class="ln" style="top:350px;color:#aeb3c2">15</div>
<div class="code" style="top:350px">            System.<span class="f">out</span>.println(str);</div>
<div class="ln" style="top:372px;color:#aeb3c2">16</div>
<div class="code" style="top:372px">        }</div>
<div class="ln" style="top:394px;color:#aeb3c2">17</div>
<div class="code" style="top:394px">    }</div>
<div class="ln" style="top:416px;color:#aeb3c2">18</div>
<div class="code" style="top:416px">}</div>
<div class="ln" style="top:438px;color:#363944">19</div>
<svg width="14" height="14" viewBox="0 0 14 14" style="left:29px;top:112px"><path d="M1.800 0.800L12.600 7L1.800 13.200Z" fill="#eef8ef" stroke="#208a3c" stroke-width="1.300" stroke-linejoin="round"/></svg>
<svg width="14" height="14" viewBox="0 0 14 14" style="left:29px;top:134px"><path d="M1.800 0.800L12.600 7L1.800 13.200Z" fill="#eef8ef" stroke="#208a3c" stroke-width="1.300" stroke-linejoin="round"/></svg>
</div>
<div id="bottom" class="abs">
<div class="abs" style="left:0;top:40px;width:1302px;height:1px;background:#ebecf0"></div>
<div class="abs" style="left:0;top:75px;width:1302px;height:1px;background:#ebecf0"></div>
<div class="t" style="left:13px;top:13px;font-weight:bold;font-size:13px;letter-spacing:0">실행</div>
<svg width="16" height="16" viewBox="0 0 16 16" style="left:64px;top:12px"><rect x="1.500" y="2.500" width="13" height="11" rx="2" fill="#f0f5ff" stroke="#6e9cf5"/><path d="M4 5.500H5M6.500 5.500H7.500" stroke="#6e9cf5" stroke-width="1"/></svg>
<div class="t" style="left:84px;top:13px">ListExam</div>
<svg width="10" height="10" viewBox="0 0 10 10" style="left:142px;top:16px"><path d="M1.500 1.500L8.500 8.500M8.500 1.500L1.500 8.500" stroke="#818594" stroke-width="1"/></svg>
<div class="abs" style="left:52px;top:38px;width:110px;height:3px;border-radius:2px;background:#a8adbd"></div>
<svg width="16" height="16" viewBox="0 0 16 16" style="left:13px;top:50px"><path d="M12.400 4.600A5.700 5.700 0 1 0 6.600 13.600" fill="none" stroke="#6c707e" stroke-width="1.200" stroke-linecap="round"/><path d="M12.900 1.400V5H9.300" fill="none" stroke="#6c707e" stroke-width="1.200" stroke-linecap="round" stroke-linejoin="round"/><path d="M9.200 8.800L15 12.200L9.200 15.600Z" fill="#f2fcf3" stroke="#208a3c" stroke-width="1.100" stroke-linejoin="round"/></svg>
<div class="abs" style="left:40px;top:52px;width:12px;height:12px;border-radius:2px;background:#cecece"></div>
<div class="abs" style="left:62px;top:48px;width:1px;height:20px;background:#dfe0e4"></div>
<svg width="16" height="16" viewBox="0 0 16 16" style="left:71px;top:50px"><path d="M1.500 5.500a1 1 0 0 1 1-1H4.600L5.600 3H10.400L11.400 4.500H13.500a1 1 0 0 1 1 1V12a1 1 0 0 1-1 1H2.500a1 1 0 0 1-1-1z" fill="none" stroke="#c2c4ca" stroke-width="1"/><circle cx="8" cy="8.600" r="2.400" fill="none" stroke="#c2c4ca" stroke-width="1"/></svg>
<svg width="18" height="18" viewBox="0 0 18 18" style="left:96.5px;top:49px"><path d="M2 13.500V11.400A7 7 0 0 1 16 11.400V13.500Z" fill="none" stroke="#c2c4ca" stroke-width="1" stroke-linejoin="round"/><circle cx="8.600" cy="10.600" r="1.300" fill="none" stroke="#c2c4ca" stroke-width="1"/><path d="M9.600 9.700L12.200 7.400" stroke="#c2c4ca" stroke-width="1" stroke-linecap="round"/><path d="M18 13.600V17.200H14.400Z" fill="#c2c4ca"/></svg>
<svg width="16" height="16" viewBox="0 0 16 16" style="left:123px;top:50px"><circle cx="8" cy="3" r="1.100" fill="#6c707e"/><circle cx="8" cy="8" r="1.100" fill="#6c707e"/><circle cx="8" cy="13" r="1.100" fill="#6c707e"/></svg>
<div class="abs" style="left:38px;top:76px;width:1px;height:307px;background:#ebecf0"></div>
<div class="abs" style="left:39px;top:76px;width:862px;height:307px;background:#fff"></div>
<svg width="16" height="16" viewBox="0 0 16 16" style="left:11px;top:85px"><path d="M8 13V3.500M4 7.500L8 3.500L12 7.500" fill="none" stroke="#c2c4ca" stroke-width="1" stroke-linecap="round" stroke-linejoin="round"/></svg>
<svg width="16" height="16" viewBox="0 0 16 16" style="left:11px;top:111px"><path d="M8 3V12.500M4 8.500L8 12.500L12 8.500" fill="none" stroke="#c2c4ca" stroke-width="1" stroke-linecap="round" stroke-linejoin="round"/></svg>
<svg width="16" height="16" viewBox="0 0 16 16" style="left:11px;top:138px"><path d="M1.500 3.500H14.500M1.500 7.500H12A2.200 2.200 0 0 1 12 12H8.500M10.500 10L8.500 12L10.500 14M1.500 11.500H5.500" fill="none" stroke="#6c707e" stroke-width="1" stroke-linecap="round" stroke-linejoin="round"/></svg>
<svg width="16" height="16" viewBox="0 0 16 16" style="left:11px;top:163px"><path d="M1.500 3.500H7M1.500 7.500H7M1.500 13.500H14.500M11 2.500V10.500M8 7.500L11 10.500L14 7.500" fill="none" stroke="#6c707e" stroke-width="1" stroke-linecap="round" stroke-linejoin="round"/></svg>
<svg width="16" height="16" viewBox="0 0 16 16" style="left:11px;top:190px"><path d="M4.500 6V2.500H11.500V6M4.500 12H2.500a1 1 0 0 1-1-1V7a1 1 0 0 1 1-1H13.500a1 1 0 0 1 1 1V11a1 1 0 0 1-1 1H11.500M4.500 9.500H11.500V13.500H4.500Z" fill="none" stroke="#c2c4ca" stroke-width="1" stroke-linejoin="round"/></svg>
<svg width="16" height="16" viewBox="0 0 16 16" style="left:11px;top:216px"><path d="M2 4.500H14M6 4.500V2.500H10V4.500M3.500 4.500V13a1 1 0 0 0 1 1H11.500a1 1 0 0 0 1-1V4.500M6.500 7V11.500M9.500 7V11.500" fill="none" stroke="#6c707e" stroke-width="1" stroke-linecap="round" stroke-linejoin="round"/></svg>
<div class="abs" style="left:39px;top:76px;width:862px;height:307px;overflow:hidden">
<div class="con sys" style="left:11px;top:0px">C:\Users\kdy29\.jdks\openjdk-24.0.1\bin\java.exe "-javaagent:C:\Program Files\JetBrains\IntelliJ IDEA 2025</div>
<div class="con " style="left:11px;top:22px">4</div>
<div class="con " style="left:11px;top:44px">Hello</div>
<div class="con " style="left:11px;top:88px">World</div>
<div class="con " style="left:11px;top:110px">Hello</div>
<div class="con sys" style="left:11px;top:154px"><span style="letter-spacing:0.65px">종료</span> <span style="letter-spacing:0.65px">코드</span> 0(<span style="letter-spacing:0.65px">으</span>)<span style="letter-spacing:0.65px">로</span> <span style="letter-spacing:0.65px">완료된</span> <span style="letter-spacing:0.65px">프로세스</span></div>
</div>
<div class="abs" style="left:50px;top:372px;width:322px;height:10px;background:#e2e2e2;border:1px solid #dbdbdb"></div>
<div class="abs" style="left:901px;top:76px;width:1px;height:307px;background:#ebecf0"></div>
<div class="abs" style="left:902px;top:110px;width:400px;height:1px;background:#ebecf0"></div>
<div class="t" style="left:912px;top:85px;font-size:11.5px;font-weight:500;letter-spacing:0;color:#000">성능</div>
<svg style="left:1273.5px;top:85px" width="16" height="16" viewBox="0 0 16 16" ><path d="M6.200 4L10.200 8L6.200 12" fill="none" stroke="#8a8d99" stroke-width="1.0" stroke-linecap="round" stroke-linejoin="round"/></svg>
<div class="abs" style="left:918px;top:130px;width:80px;height:28px;border:1px solid #dfe1e5;border-radius:4px"></div>
<div class="t" style="left:918px;top:136px;width:80px;text-align:center;color:#a8adbd;font-size:13px;letter-spacing:0">결과 표시</div>
<svg width="16" height="16" viewBox="0 0 16 16" style="left:1215px;top:136px"><circle cx="8" cy="8" r="6" fill="none" stroke="#b4b8c4" stroke-width="1.100"/><circle cx="8" cy="8" r="2.800" fill="#b4b8c4"/></svg>
<div class="t" style="left:1238px;top:136px;color:#a8adbd;letter-spacing:0;font-family:'DejaVu Sans Mono','Liberation Mono','Noto Sans CJK KR','NanumGothic',monospace;font-size:13.31px">00:00</div>
<div class="t" style="left:902px;top:227px;width:400px;text-align:center;color:#818594;font-size:13.3px;letter-spacing:0">프로세스 종료</div>
</div>
<div id="status" class="abs">
<div class="abs" style="left:11px;top:10px;width:8px;height:8px;border:1.500px solid #3574f0;border-radius:2px;background:#e7effd"></div>
<div class="t" style="left:23px;top:6px">java</div>
<svg width="12" height="12" viewBox="0 0 12 12" style="left:50px;top:7px"><path d="M4 2.500L8 6L4 9.500" fill="none" stroke="#818594" stroke-width="1.200" stroke-linecap="round" stroke-linejoin="round"/></svg>
<div class="t" style="left:68px;top:6px">src</div>
<svg width="12" height="12" viewBox="0 0 12 12" style="left:89px;top:7px"><path d="M4 2.500L8 6L4 9.500" fill="none" stroke="#818594" stroke-width="1.200" stroke-linecap="round" stroke-linejoin="round"/></svg>
<svg style="left:107px;top:5px" width="16" height="16" viewBox="0 0 16 16" ><circle cx="8" cy="8" r="6.5" fill="#edf3ff" stroke="#3574f0"/><path d="M10.2 6.3A2.8 2.8 0 1 0 10.2 9.7" fill="none" stroke="#3574f0" stroke-width="1.1" stroke-linecap="round"/><path d="M9.4 0.3L15.2 3.55L9.4 6.8Z" fill="#f7f8fa" stroke="#f7f8fa" stroke-width="2.2" stroke-linejoin="round"/><path d="M9.4 0.3L15.2 3.55L9.4 6.8Z" fill="#f2fcf3" stroke="#208a3c" stroke-width="1.1" stroke-linejoin="round"/></svg>
<div class="t" style="left:127px;top:6px">ListExam</div>
<div class="t" style="left:1118px;top:6px">19:1</div>
<svg width="14" height="15" viewBox="0 0 14 15" style="left:1158px;top:6.500px"><path d="M7 0.800L10 4.600H8.800L11.400 8H9.800L12.600 11.600H7.800V14H6.200V11.600H1.400L4.200 8H2.600L5.200 4.600H4Z" fill="#6c707e" stroke="#6c707e" stroke-width="0.600" stroke-linejoin="round"/><path d="M5.600 5.400H8.400M4.600 8.800H9.400" stroke="#f7f8fa" stroke-width="0.700"/></svg>
<div class="t" style="left:1189px;top:6px;letter-spacing:-0.700px">CRLF</div>
<div class="t" style="left:1232px;top:6px">UTF-8</div>
<div class="t" style="left:1284px;top:6px;font-size:13px;letter-spacing:0">4개 공백</div>
<svg width="16" height="16" viewBox="0 0 16 16" style="left:1349px;top:5.500px"><rect x="1.600" y="7.600" width="9.600" height="6.800" rx="1.400" fill="none" stroke="#6c707e" stroke-width="1.200"/><path d="M7.800 7.600V5.300C7.800 3.500 9 2.500 10.600 2.500S13.400 3.500 13.400 5.300V6" fill="none" stroke="#6c707e" stroke-width="1.200" stroke-linecap="round"/><rect x="5.600" y="10.200" width="1.600" height="1.600" fill="#6c707e"/></svg>
</div>
</body></html>
